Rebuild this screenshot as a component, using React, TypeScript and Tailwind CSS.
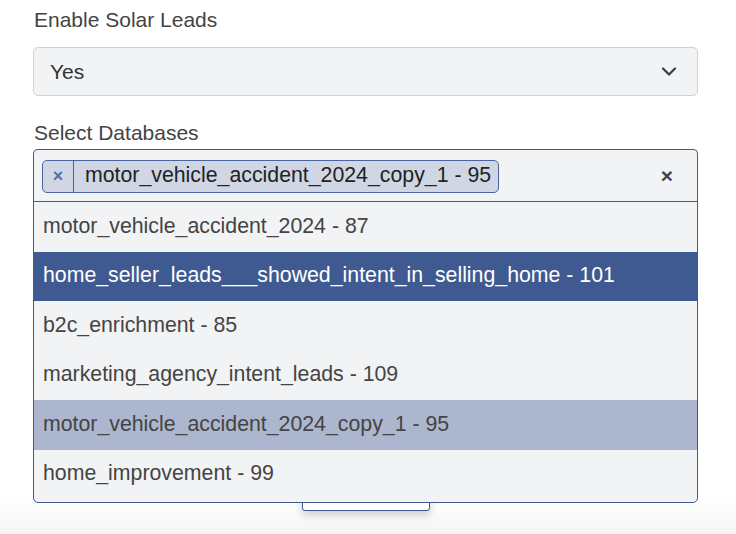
import React from "react";

const options = [
  { label: "motor_vehicle_accident_2024 - 87", state: "" },
  { label: "home_seller_leads___showed_intent_in_selling_home - 101", state: "focused" },
  { label: "b2c_enrichment - 85", state: "" },
  { label: "marketing_agency_intent_leads - 109", state: "" },
  { label: "motor_vehicle_accident_2024_copy_1 - 95", state: "selected" },
  { label: "home_improvement - 99", state: "" },
];

function Chevron() {
  return (
    <svg width="16" height="10" viewBox="0 0 16 10" fill="none">
      <path d="M2 1.5 L8 7.5 L14 1.5" stroke="#3a3d42" strokeWidth="2.2" strokeLinecap="round" strokeLinejoin="round" />
    </svg>
  );
}

export default function App() {
  return (
    <div
      className="relative h-[534px] overflow-hidden bg-white text-[#444]"
      style={{ fontFamily: '"Liberation Sans", Arial, sans-serif' }}
    >
      <div className="pl-[33px] pr-[38px] pt-[7px]">
        {/* Enable Solar Leads */}
        <label className="block text-[21px] leading-[26px] pl-[1px]">Enable Solar Leads</label>
        <div className="mt-[14px] flex h-[49px] items-center justify-between rounded-[5px] border border-[#cdd1d8] bg-[#f2f3f5] pl-[16px] pr-[20px]">
          <span className="text-[21px] text-[#333]">Yes</span>
          <Chevron />
        </div>

        {/* Select Databases */}
        <label className="mt-[24px] block text-[21px] leading-[26px] pl-[1px]">Select Databases</label>
        <div className="relative mt-[3px]">
          <div className="rounded-t-[5px] border border-b-0 border-[#3f5a91] bg-[#f2f3f5]">
            <div className="flex h-[52px] items-center justify-between pl-[8px] pr-[24px]">
              <div className="flex h-[33px] items-center rounded-[5px] border border-[#4a64a0] bg-[#d0d6e4]">
                <span className="flex h-full w-[31px] items-center justify-center border-r border-[#4a64a0] text-[18px] font-bold text-[#5a6f9e]">
                  ×
                </span>
                <span className="pl-[11px] pr-[7px] text-[21.3px] text-[#222]">
                  motor_vehicle_accident_2024_copy_1 - 95
                </span>
              </div>
              <span className="text-[21px] font-bold text-[#444]">×</span>
            </div>
          </div>
          <div className="absolute left-0 right-0 top-[52px] z-10 rounded-b-[5px] border border-[#3f5a91] bg-[#f2f3f5] pb-[3px]">
            {options.map((o) => (
              <div
                key={o.label}
                className={
                  "flex h-[49.5px] items-center pl-[9px] text-[21.3px] " +
                  (o.state === "focused"
                    ? "bg-[#3f5a91] text-white"
                    : o.state === "selected"
                    ? "bg-[#acb6ce] text-[#444]"
                    : "text-[#444]")
                }
              >
                {o.label}
              </div>
            ))}
          </div>
        </div>
      </div>

      {/* content partly hidden under the open menu */}
      <div className="absolute bottom-0 left-0 right-0 h-[40px] bg-gradient-to-b from-white to-[#f5f5f5]" />
      <div className="absolute left-0 right-0 top-[470px] flex justify-center">
        <button className="ml-[-4px] h-[41px] w-[128px] rounded-[3px] border border-[#3f5a91] bg-white shadow-[0_4px_8px_rgba(0,0,0,0.18)]" />
      </div>
    </div>
  );
}
